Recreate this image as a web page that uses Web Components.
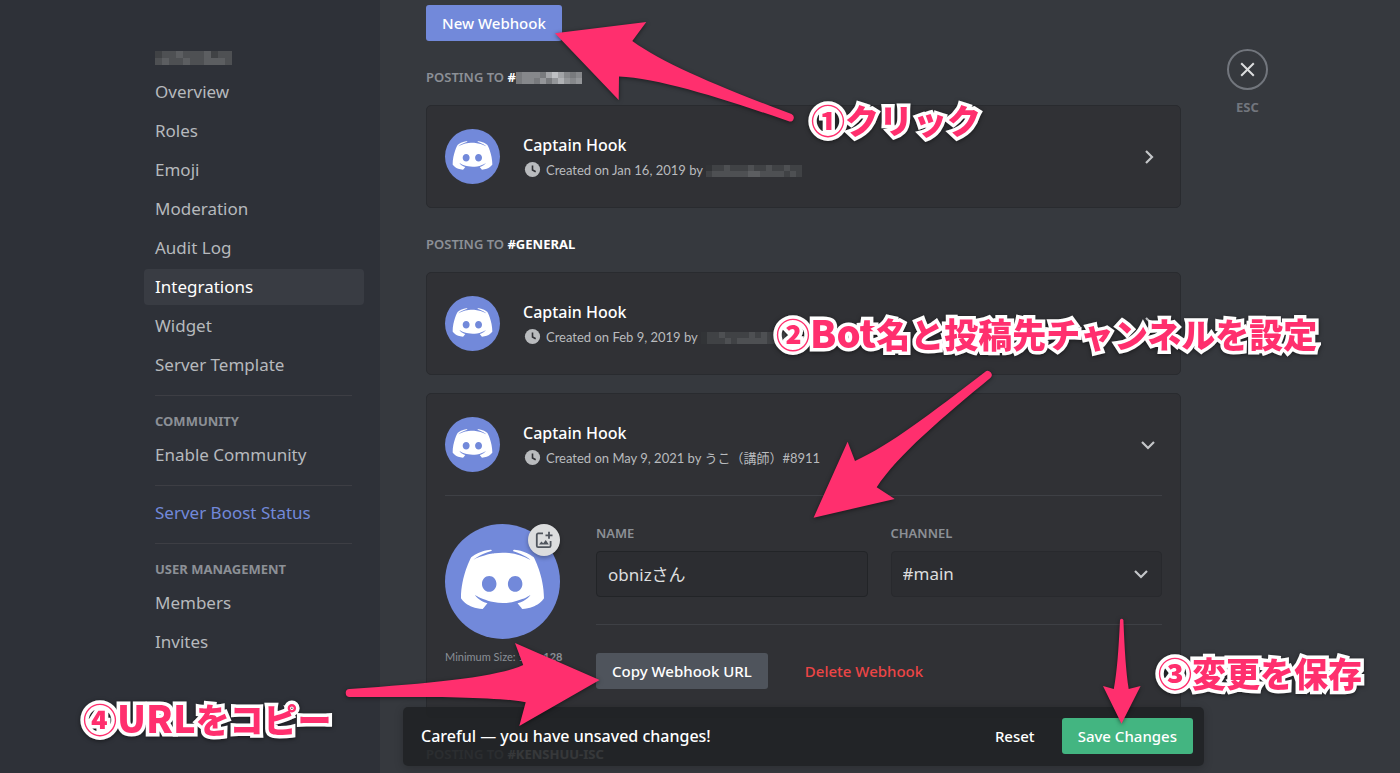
<!DOCTYPE html>
<html lang="ja">
<head>
<meta charset="utf-8">
<title>Integrations</title>
<style>
    body {
        margin: 0;
        background: #36393e;
        font-family: "Noto Sans", "Noto Sans CJK JP", sans-serif;
        font-size: 17px;
        color: #fff;
    }
</style>
</head>
<body>
<settings-page>
    <settings-nav slot="nav">
        <nav-header><pixel-mask shades="34454445344,45445445554" step="7"></pixel-mask></nav-header>
        <nav-item>Overview</nav-item>
        <nav-item>Roles</nav-item>
        <nav-item>Emoji</nav-item>
        <nav-item>Moderation</nav-item>
        <nav-item>Audit Log</nav-item>
        <nav-item selected>Integrations</nav-item>
        <nav-item>Widget</nav-item>
        <nav-item>Server Template</nav-item>
        <nav-divider></nav-divider>
        <nav-header>COMMUNITY</nav-header>
        <nav-item>Enable Community</nav-item>
        <nav-divider></nav-divider>
        <nav-item boost>Server Boost Status</nav-item>
        <nav-divider></nav-divider>
        <nav-header>USER MANAGEMENT</nav-header>
        <nav-item>Members</nav-item>
        <nav-item>Invites</nav-item>
    </settings-nav>

    <ui-button look="brand">New Webhook</ui-button>

    <channel-heading>#<pixel-mask shades="78887ACA878,7887979B989" step="6"></pixel-mask></channel-heading>
    <webhook-card>
        <span slot="created">Created on Jan 16, 2019 by <pixel-mask shades="2334333433433433,3444444554444343" step="6"></pixel-mask></span>
    </webhook-card>

    <channel-heading>#GENERAL</channel-heading>
    <webhook-card>
        <span slot="created">Created on Feb 9, 2019 by <pixel-mask shades="2334333343434433,2333434444433343" step="6"></pixel-mask></span>
    </webhook-card>
    <webhook-card open>
        <span slot="created">Created on May 9, 2021 by うこ（講師）#8911</span>
        <webhook-form slot="body" name="obnizさん" channel="#main"></webhook-form>
    </webhook-card>

    <channel-heading>#KENSHUU-ISC</channel-heading>

    <save-bar slot="notice">Careful — you have unsaved changes!</save-bar>
    <close-button slot="tools"></close-button>
</settings-page>

<guide-overlay>
    <guide-label style="--x: 811px; --y: 120px">①クリック</guide-label>
    <guide-label style="--x: 776px; --y: 334px">②<big>Bot</big>名と投稿先チャンネルを設定</guide-label>
    <guide-label style="--x: 1158px; --y: 673px">③変更を保存</guide-label>
    <guide-label style="--x: 83px; --y: 719px">④<big>URL</big>をコピー</guide-label>
</guide-overlay>

<script>
// Base class: puts the template of each element in its shadow root
class BaseElement extends HTMLElement {
    constructor() {
        super();
        this.attachShadow({ mode: 'open' });
    }

    connectedCallback() {
        const template = document.createElement('template');
        template.innerHTML = this.template();
        this.shadowRoot.replaceChildren(template.content.cloneNode(true));
    }
}

// Page frame
class SettingsPage extends BaseElement {
    template() {
        return `
            <style>
                :host {
                    display: grid;
                    grid-template-columns: minmax(240px, 19fr) 51fr;
                    height: 100vh;
                    overflow: hidden;
                }
                aside {
                    display: flex;
                    justify-content: flex-end;
                    padding: 42px 16px 0 0;
                    background: #2e3138;
                }
                .region {
                    display: flex;
                    align-items: flex-start;
                    min-width: 0;
                    height: 100vh;
                }
                main {
                    position: relative;
                    flex: 0 1 847px;
                    min-width: 0;
                    height: 100%;
                    box-sizing: border-box;
                    padding: 5px 46px 0;
                    overflow: hidden;
                }
                ::slotted(save-bar) {
                    position: absolute;
                    left: 23px;
                    right: 23px;
                    bottom: 7px;
                }
            </style>
            <aside><slot name="nav"></slot></aside>
            <div class="region">
                <main><slot></slot><slot name="notice"></slot></main>
                <slot name="tools"></slot>
            </div>
        `;
    }
}

// Sidebar
class SettingsNav extends BaseElement {
    template() {
        return `
            <style>
                :host { display: block; width: 220px; }
                nav { display: flex; flex-direction: column; }
            </style>
            <nav><slot></slot></nav>
        `;
    }
}

class NavItem extends BaseElement {
    template() {
        return `
            <style>
                :host { display: block; margin-bottom: 3px; }
                a {
                    display: block;
                    padding: 0 11px;
                    border-radius: 4px;
                    line-height: 36px;
                    color: #b6b9bd;
                    text-decoration: none;
                    white-space: nowrap;
                }
                :host([selected]) a { background: #393c43; color: #fff; }
                :host([boost]) a { color: #7289da; }
            </style>
            <a href="#"><slot></slot></a>
        `;
    }
}

class NavHeader extends BaseElement {
    template() {
        return `
            <style>
                :host {
                    display: flex;
                    align-items: center;
                    height: 32px;
                    padding: 0 11px;
                    font-size: 13px;
                    font-weight: 700;
                    color: #8c9096;
                }
            </style>
            <slot></slot>
        `;
    }
}

class NavDivider extends BaseElement {
    template() {
        return `
            <style>
                :host { display: block; height: 1px; margin: 9px 12px 9px 11px; background: #3d3e44; }
            </style>
        `;
    }
}

// Blocks that hide a name. One hex digit per block, one group per row
class PixelMask extends BaseElement {
    template() {
        const step = Number(this.getAttribute('step'));
        const rows = this.getAttribute('shades').split(',');
        let rects = '';
        rows.forEach((row, y) => {
            [...row].forEach((digit, x) => {
                const v = 22 + parseInt(digit, 16) * 14;
                rects += `<rect x="${x * step}" y="${y * step}" width="${step}" height="${step}" fill="rgb(${v},${v + 2},${v + 5})"/>`;
            });
        });
        return `
            <style>
                :host { display: inline-block; vertical-align: middle; }
                svg { display: block; }
            </style>
            <svg width="${rows[0].length * step}" height="${rows.length * step}" shape-rendering="crispEdges" aria-hidden="true">${rects}</svg>
        `;
    }
}

class UiButton extends BaseElement {
    template() {
        return `
            <style>
                :host { display: block; }
                button {
                    display: block;
                    height: 36px;
                    padding: 0 16px;
                    border: 0;
                    border-radius: 3px;
                    background: none;
                    color: #fff;
                    font: 500 15px "Noto Sans", sans-serif;
                    white-space: nowrap;
                }
                :host([look=brand]) button { background: #7289da; }
                :host([look=grey]) button { background: #4f545c; }
                :host([look=green]) button { background: #43b581; }
                :host([look=danger]) button { color: #ec4546; }
            </style>
            <button type="button"><slot></slot></button>
        `;
    }
}

class ChannelHeading extends BaseElement {
    template() {
        return `
            <style>
                :host { display: block; margin: 27px 0 19px; }
                h2 { margin: 0; font-size: 13px; font-weight: 600; line-height: 18px; color: #8c9096; }
                b { font-weight: 700; color: #fff; }
            </style>
            <h2>POSTING TO <b><slot></slot></b></h2>
        `;
    }
}

class ClydeAvatar extends BaseElement {
    template() {
        return `
            <style>
                :host { display: block; width: 55px; height: 55px; }
                svg { display: block; width: 100%; height: 100%; border-radius: 50%; background: #7289da; }
            </style>
            <svg viewBox="-5.4 -8.7 38.8 38.8" fill="#fff" aria-hidden="true">
                <path d="M20.664 20s-.863-1.024-1.582-1.929c3.14-.88 4.34-2.833 4.34-2.833-.984.643-1.919 1.095-2.758 1.405-1.198.5-2.349.833-3.476 1.024-2.3.428-4.41.31-6.208-.024-1.367-.262-2.542-.643-3.525-1.024-.55-.214-1.15-.476-1.75-.81-.07-.047-.143-.07-.215-.118-.048-.024-.072-.048-.096-.072-.432-.238-.671-.405-.671-.405s1.15 1.905 4.195 2.81C8.199 18.929 7.312 20 7.312 20 2.014 19.833 0 16.381 0 16.381 0 8.714 3.452 2.5 3.452 2.5 6.904-.071 10.188 0 10.188 0l.24.286C6.113 1.524 4.123 3.405 4.123 3.405s.528-.286 1.415-.69c2.565-1.12 4.602-1.43 5.441-1.5.144-.025.264-.048.408-.048 1.462-.191 3.116-.239 4.842-.048 2.278.262 4.723.928 7.216 2.286 0 0-1.894-1.786-5.97-3.024L17.812 0s3.284-.071 6.736 2.5c0 0 3.452 6.214 3.452 13.881 0 0-2.038 3.452-7.336 3.619ZM9.517 8.881c-1.366 0-2.445 1.19-2.445 2.643 0 1.452 1.103 2.643 2.445 2.643 1.367 0 2.445-1.19 2.445-2.643.024-1.453-1.078-2.643-2.445-2.643Zm8.75 0c-1.366 0-2.445 1.19-2.445 2.643 0 1.452 1.102 2.643 2.445 2.643 1.367 0 2.445-1.19 2.445-2.643 0-1.453-1.078-2.643-2.445-2.643Z"/>
            </svg>
        `;
    }
}

class WebhookCard extends BaseElement {
    template() {
        const chevron = this.hasAttribute('open') ? 'M4 7 L10 13 L16 7' : 'M8 4 L14 10 L8 16';
        return `
            <style>
                :host {
                    display: block;
                    margin-bottom: 18px;
                    padding: 0 18px;
                    border: 1px solid #292b2f;
                    border-radius: 5px;
                    background: #303135;
                }
                header { display: flex; align-items: center; gap: 23px; height: 101px; }
                .info { flex: 1; min-width: 0; }
                h3 { margin: 0; font-size: 16px; font-weight: 500; line-height: 26px; }
                p {
                    display: flex;
                    align-items: center;
                    gap: 5px;
                    margin: 0;
                    padding-left: 1px;
                    font: 13px/24px Lato, "Noto Sans CJK JP", sans-serif;
                    color: #b9bbbe;
                    white-space: nowrap;
                }
                .toggle { display: block; width: 28px; height: 28px; padding: 4px; border: 0; background: none; }
                svg { display: block; }
            </style>
            <header>
                <clyde-avatar></clyde-avatar>
                <div class="info">
                    <h3>Captain Hook</h3>
                    <p>
                        <svg width="17" height="17" viewBox="0 0 17 17" aria-hidden="true">
                            <circle cx="8.5" cy="8.5" r="7.6" fill="#b9bbbe"/>
                            <path d="M8.5 4.5V9l3.2 1.8" fill="none" stroke="#303135" stroke-width="1.6"/>
                        </svg>
                        <slot name="created"></slot>
                    </p>
                </div>
                <button class="toggle" type="button" aria-label="Toggle">
                    <svg width="20" height="20" viewBox="0 0 20 20" fill="none" stroke="#c4c6c9" stroke-width="2.2"><path d="${chevron}"/></svg>
                </button>
            </header>
            <slot name="body"></slot>
        `;
    }
}

class WebhookForm extends BaseElement {
    template() {
        return `
            <style>
                :host {
                    display: flex;
                    align-items: flex-start;
                    gap: 36px;
                    padding: 28px 0;
                    border-top: 1px solid #3e4045;
                }
                .picture { position: relative; flex: none; width: 115px; }
                .picture clyde-avatar { width: 115px; height: 115px; }
                .upload {
                    position: absolute;
                    top: 0;
                    right: 0;
                    width: 32px;
                    height: 32px;
                    padding: 7px;
                    border: 0;
                    border-radius: 50%;
                    background: #dcddde;
                    box-shadow: 0 2px 4px rgba(0, 0, 0, .3);
                }
                .upload svg { display: block; }
                .hint { margin: 9px 0 0; font: 11px/18px Lato, sans-serif; color: #8a8f96; white-space: nowrap; }
                .hint b { font-weight: 700; }
                .fields { flex: 1; min-width: 0; }
                .row { display: grid; grid-template-columns: 1fr 1fr; gap: 23px; padding-bottom: 27px; border-bottom: 1px solid #3e4045; }
                label { display: block; margin-bottom: 9px; font-size: 13px; font-weight: 600; line-height: 18px; color: #8c9096; }
                input, select {
                    display: block;
                    width: 100%;
                    height: 46px;
                    box-sizing: border-box;
                    padding: 0 11px 2px;
                    border: 1px solid #222427;
                    border-radius: 4px;
                    background: #2c2d31;
                    color: #dcddde;
                    font: 17px "Noto Sans", "Noto Sans CJK JP", sans-serif;
                    outline: 0;
                    appearance: none;
                }
                select { border-color: #28292d; }
                .select { position: relative; }
                .select svg { position: absolute; top: 13px; right: 11px; pointer-events: none; }
                .actions { display: flex; gap: 21px; padding-top: 28px; }
            </style>
            <div class="picture">
                <clyde-avatar></clyde-avatar>
                <button class="upload" type="button" aria-label="Upload image">
                    <svg width="18" height="18" viewBox="0 0 18 18" fill="none" stroke="#4f545c" stroke-width="1.8">
                        <path d="M8 2.4H3.2c-.8 0-1.4.6-1.4 1.4v11c0 .8.6 1.4 1.4 1.4h11c.8 0 1.4-.6 1.4-1.4V10"/>
                        <path d="M14 .8v7M10.5 4.3h7"/>
                        <path d="M4 13.6l2.4-3 1.8 1.7 2.6-3.3 3 4.6Z" fill="#4f545c" stroke="none"/>
                    </svg>
                </button>
                <p class="hint">Minimum Size: <b>128x128</b></p>
            </div>
            <div class="fields">
                <div class="row">
                    <div>
                        <label for="name">NAME</label>
                        <input id="name" type="text" value="${this.getAttribute('name')}">
                    </div>
                    <div>
                        <label for="channel">CHANNEL</label>
                        <div class="select">
                            <select id="channel"><option>${this.getAttribute('channel')}</option></select>
                            <svg width="20" height="20" viewBox="0 0 20 20" fill="none" stroke="#c4c6c9" stroke-width="2.2" aria-hidden="true"><path d="M4 7 L10 13 L16 7"/></svg>
                        </div>
                    </div>
                </div>
                <div class="actions">
                    <ui-button look="grey">Copy Webhook URL</ui-button>
                    <ui-button look="danger">Delete Webhook</ui-button>
                </div>
            </div>
        `;
    }
}

class SaveBar extends BaseElement {
    template() {
        return `
            <style>
                :host {
                    display: flex;
                    align-items: center;
                    gap: 11px;
                    height: 59px;
                    box-sizing: border-box;
                    padding: 0 11px 2px 18px;
                    border-radius: 5px;
                    background: rgba(32, 34, 37, .9);
                    box-shadow: 0 2px 10px rgba(0, 0, 0, .2);
                    font-size: 16px;
                    font-weight: 500;
                }
                span { flex: 1; white-space: nowrap; }
            </style>
            <span><slot></slot></span>
            <ui-button>Reset</ui-button>
            <ui-button look="green">Save Changes</ui-button>
        `;
    }
}

class CloseButton extends BaseElement {
    template() {
        return `
            <style>
                :host { display: block; flex: none; padding-top: 49px; text-align: center; }
                button {
                    display: grid;
                    place-items: center;
                    width: 41px;
                    height: 41px;
                    padding: 0;
                    border: 2px solid #72767d;
                    border-radius: 50%;
                    background: none;
                }
                div { margin-top: 8px; font-size: 13px; font-weight: 700; line-height: 18px; color: #72767d; }
            </style>
            <button type="button" aria-label="Close">
                <svg width="15" height="15" viewBox="0 0 15 15" stroke="#dcddde" stroke-width="2"><path d="M1.2 1.2 L13.8 13.8 M13.8 1.2 L1.2 13.8"/></svg>
            </button>
            <div>ESC</div>
        `;
    }
}

// Arrows and labels drawn over the page
class GuideOverlay extends BaseElement {
    template() {
        return `
            <style>
                :host { position: absolute; inset: 0; overflow: hidden; pointer-events: none; }
                svg { display: block; width: 1400px; height: 773px; filter: drop-shadow(0 1px 2px rgba(0, 0, 0, .5)); }
            </style>
            <svg viewBox="0 0 1400 773" fill="#ff2f6e" aria-hidden="true">
                <path d="M555 33.3 L646.3 22 L632.3 41 C664 64 722 88 791.5 114 A4 4 0 0 1 789.5 121.6 C730 101 660 78 619 76.5 L618.7 100Z"/>
                <path d="M813.6 517.7 L847.6 441.7 L855 461 C890 445 930 414 985 372 A4 4 0 0 1 990.3 378 C944 416 897 456 876.7 487.3 L894.7 499Z"/>
                <path d="M1121.5 723.7 L1103 686 L1113.8 689 C1117 672 1118.6 650 1120 620 Q1121.7 617.6 1123.4 620 C1124.6 650 1126 672 1128.7 689 L1140.6 686Z"/>
                <path d="M599.6 680 L515 643 L523.2 665 C497 677 435 683 349.5 689 A4 4 0 0 0 350 697 C420 697 492 696 525.7 702.3 L519.3 726Z"/>
            </svg>
            <slot></slot>
        `;
    }
}

class GuideLabel extends BaseElement {
    template() {
        return `
            <style>
                :host {
                    position: absolute;
                    left: var(--x);
                    top: calc(var(--y) - 24px);
                    font: 900 34px/48px "Noto Sans CJK JP", sans-serif;
                    color: #ff2f6e;
                    white-space: nowrap;
                    -webkit-text-stroke: 7px #fff;
                    paint-order: stroke fill;
                    filter: drop-shadow(0 1px 2px rgba(0, 0, 0, .5));
                }
                ::slotted(big) { font-size: 38px; line-height: 1; }
            </style>
            <slot></slot>
        `;
    }
}

customElements.define('clyde-avatar', ClydeAvatar);
customElements.define('pixel-mask', PixelMask);
customElements.define('ui-button', UiButton);
customElements.define('nav-item', NavItem);
customElements.define('nav-header', NavHeader);
customElements.define('nav-divider', NavDivider);
customElements.define('settings-nav', SettingsNav);
customElements.define('channel-heading', ChannelHeading);
customElements.define('webhook-form', WebhookForm);
customElements.define('webhook-card', WebhookCard);
customElements.define('save-bar', SaveBar);
customElements.define('close-button', CloseButton);
customElements.define('settings-page', SettingsPage);
customElements.define('guide-label', GuideLabel);
customElements.define('guide-overlay', GuideOverlay);
</script>
</body>
</html>
